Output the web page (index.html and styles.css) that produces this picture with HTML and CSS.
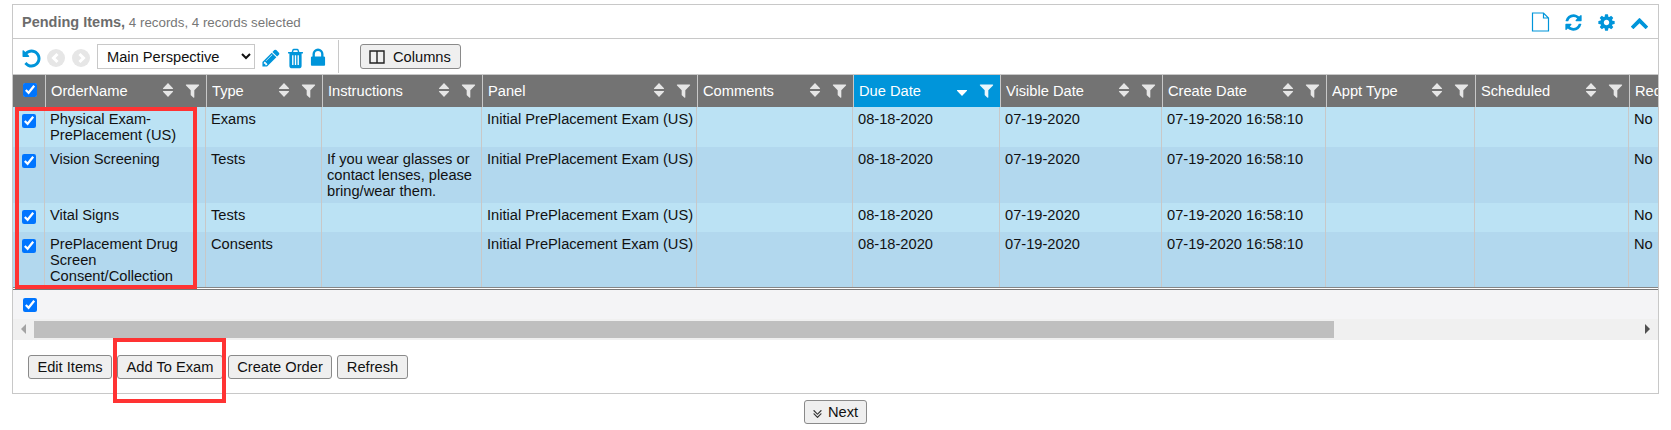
FILE: index.html
```html
<!DOCTYPE html>
<html lang="en">
<head>
  <meta charset="UTF-8">
  <title>Pending Items</title>
  <link rel="stylesheet" href="styles.css">
</head>
<body>
  <svg class="sprite" aria-hidden="true">
    <symbol id="i-filter" viewBox="0 0 1792 1792"><path d="M1595 295q17 41-14 70l-493 493v742q0 42-39 59-13 5-25 5-27 0-45-19l-256-256q-19-19-19-45v-486l-493-493q-31-29-14-70 17-39 59-39h1280q42 0 59 39z"/></symbol>
    <symbol id="i-sort" viewBox="0 0 12 16"><path d="M6 1l5 5.2q.4.8-.5.8H1.500q-.9 0-.5-.8zM6 15l5-5.200q.4-.8-.5-.8H1.500q-.9 0-.5.8z"/></symbol>
    <symbol id="i-sort-down" viewBox="0 0 12 16"><path d="M6 15l5-5.200q.4-.8-.5-.8H1.500q-.9 0-.5.8z"/></symbol>
    <symbol id="i-cog" viewBox="0 0 1792 1792"><path d="M1152 896q0-106-75-181t-181-75-181 75-75 181 75 181 181 75 181-75 75-181zm512-109v222q0 12-8 23t-20 13l-185 28q-19 54-39 91 35 50 107 138 10 12 10 25t-9 23q-27 37-99 108t-94 71q-12 0-26-9l-138-108q-44 23-91 38-16 136-29 186-7 28-36 28h-222q-14 0-24.500-8.500t-11.500-21.500l-28-184q-49-16-90-37l-141 107q-10 9-25 9-14 0-25-11-126-114-165-168-7-10-7-23 0-12 8-23 15-21 51-66.500t54-70.500q-27-50-41-99l-183-27q-13-2-21-12.500t-8-23.500v-222q0-12 8-23t19-13l186-28q14-46 39-92-40-57-107-138-10-12-10-24 0-10 9-23 26-36 98.500-107.500t94.500-71.500q13 0 26 10l138 107q44-23 91-38 16-136 29-186 7-28 36-28h222q14 0 24.500 8.500t11.500 21.500l28 184q49 16 90 37l142-107q9-9 24-9 13 0 25 10 129 119 165 170 7 8 7 22 0 12-8 23-15 21-51 66.500t-54 70.500q26 50 41 98l183 28q13 2 21 12.500t8 23.500z"/></symbol>
    <symbol id="i-refresh" viewBox="0 0 1792 1792"><path d="M1639 1056q0 5-1 7-64 268-268 434.500t-478 166.500q-146 0-282.500-55t-243.500-157l-129 129q-19 19-45 19t-45-19-19-45v-448q0-26 19-45t45-19h448q26 0 45 19t19 45-19 45l-137 137q71 66 161 102t187 36q134 0 250-65t186-179q11-17 53-117 8-23 30-23h192q13 0 22.500 9.500t9.500 22.500zm25-800v448q0 26-19 45t-45 19h-448q-26 0-45-19t-19-45 19-45l138-138q-148-137-349-137-134 0-250 65t-186 179q-11 17-53 117-8 23-30 23h-199q-13 0-22.500-9.500t-9.500-22.500v-7q65-268 270-434.500t480-166.500q146 0 284 55.500t245 156.500l130-129q19-19 45-19t45 19 19 45z"/></symbol>
    <symbol id="i-chevron" viewBox="0 0 1792 1792"><path d="M1683 1331l-166 165q-19 19-45 19t-45-19l-531-531-531 531q-19 19-45 19t-45-19l-166-165q-19-19-19-45.500t19-45.500l742-741q19-19 45-19t45 19l742 741q19 19 19 45.500t-19 45.500z"/></symbol>
    <symbol id="i-undo" viewBox="0 0 1792 1792"><path d="M1664 896q0 156-61 298t-164 245-245 164-298 61q-172 0-327-72.500t-264-204.500q-7-10-6.500-22.500t8.500-20.500l137-138q10-9 25-9 16 2 23 12 73 95 179 147t225 52q104 0 198.500-40.500t163.500-109.500 109.500-163.500 40.500-198.500-40.500-198.500-109.500-163.500-163.500-109.500-198.500-40.500q-98 0-188 35.500t-160 101.500l137 138q31 30 14 69-17 40-59 40h-448q-26 0-45-19t-19-45v-448q0-42 40-59 39-17 69 14l130 129q107-101 244.500-156.500t284.500-55.500q156 0 298 61t245 164 164 245 61 298z"/></symbol>
    <symbol id="i-pencil" viewBox="0 0 1792 1792"><path d="M491 1536l91-91-235-235-91 91v107h128v128h107zm523-928q0-22-22-22-10 0-17 7l-542 542q-7 7-7 17 0 22 22 22 10 0 17-7l542-542q7-7 7-17zm-54-192l416 416-832 832h-416v-416zm683 96q0 53-37 90l-166 166-416-416 166-165q36-38 90-38 53 0 91 38l235 234q37 39 37 91z"/></symbol>
    <symbol id="i-trash" viewBox="0 0 1792 1792" preserveAspectRatio="none"><path d="M704 1376v-704q0-14-9-23t-23-9h-64q-14 0-23 9t-9 23v704q0 14 9 23t23 9h64q14 0 23-9t9-23zm256 0v-704q0-14-9-23t-23-9h-64q-14 0-23 9t-9 23v704q0 14 9 23t23 9h64q14 0 23-9t9-23zm256 0v-704q0-14-9-23t-23-9h-64q-14 0-23 9t-9 23v704q0 14 9 23t23 9h64q14 0 23-9t9-23zm-544-992h448l-48-117q-7-9-17-11h-317q-10 2-17 11zm928 32v64q0 14-9 23t-23 9h-96v948q0 83-47 143.500t-113 60.500h-832q-66 0-113-58.500t-47-141.500v-952h-96q-14 0-23-9t-9-23v-64q0-14 9-23t23-9h309l70-167q15-37 54-63t79-26h320q40 0 79 26t54 63l70 167h309q14 0 23 9t9 23z"/></symbol>
    <symbol id="i-lock" viewBox="0 0 1792 1792"><path d="M640 768h512v-192q0-106-75-181t-181-75-181 75-75 181v192zm832 96v576q0 40-28 68t-68 28h-960q-40 0-68-28t-28-68v-576q0-40 28-68t68-28h32v-192q0-184 132-316t316-132 316 132 132 316v192h32q40 0 68 28t28 68z"/></symbol>
    <symbol id="i-double" viewBox="0 0 1792 1792"><path d="M1395 1184q0 13-10 23l-466 466q-10 10-23 10t-23-10l-466-466q-10-10-10-23t10-23l50-50q10-10 23-10t23 10l393 393 393-393q10-10 23-10t23 10l50 50q10 10 10 23zm0-384q0 13-10 23l-466 466q-10 10-23 10t-23-10l-466-466q-10-10-10-23t10-23l50-50q10-10 23-10t23 10l393 393 393-393q10-10 23-10t23 10l50 50q10 10 10 23z"/></symbol>
  </svg>

  <div class="panel">
    <div class="title-bar">
      <div class="title"><strong>Pending Items,</strong> 4 records, 4 records selected</div>
      <div class="title-icons">
        <svg class="ico-page" viewBox="0 0 18 20"><path d="M1 1h11l5 5v13H1zM12 1v5h5" fill="#fff" stroke="#0095da" stroke-width="1.2"/></svg>
        <svg class="ico"><use href="#i-refresh"/></svg>
        <svg class="ico"><use href="#i-cog"/></svg>
        <svg class="ico"><use href="#i-chevron"/></svg>
      </div>
    </div>

    <div class="toolbar">
      <svg class="ico tool-undo"><use href="#i-undo"/></svg>
      <svg class="nav-dot nav-back" viewBox="0 0 18 18"><circle cx="9" cy="9" r="9"/><path d="M10.500 5L6.500 9l4 4"/></svg>
      <svg class="nav-dot nav-fwd" viewBox="0 0 18 18"><circle cx="9" cy="9" r="9"/><path d="M7.500 5l4 4-4 4"/></svg>
      <select class="persp"><option>Main Perspective</option></select>
      <svg class="ico tool-pencil"><use href="#i-pencil"/></svg>
      <svg class="ico tool-trash"><use href="#i-trash"/></svg>
      <svg class="ico tool-lock"><use href="#i-lock"/></svg>
      <span class="tool-sep"></span>
      <button class="btn btn-columns">
        <svg class="ico-cols" viewBox="0 0 16 14"><path d="M1 1h14v12H1zM8 1v12" fill="none" stroke="#222" stroke-width="1.4"/></svg>
        Columns
      </button>
    </div>

    <div class="grid-outer">
      <div class="grid-wrap">
        <table class="grid">
          <colgroup>
            <col class="c0"><col class="c1"><col class="c2"><col class="c3"><col class="c4"><col class="c5">
            <col class="c6"><col class="c7"><col class="c8"><col class="c9"><col class="c10"><col class="c11">
          </colgroup>
          <thead>
            <tr>
              <th><input type="checkbox" checked></th>
              <th><div class="th-in"><span>OrderName</span><svg class="s"><use href="#i-sort"/></svg><svg class="f"><use href="#i-filter"/></svg></div></th>
              <th><div class="th-in"><span>Type</span><svg class="s"><use href="#i-sort"/></svg><svg class="f"><use href="#i-filter"/></svg></div></th>
              <th><div class="th-in"><span>Instructions</span><svg class="s"><use href="#i-sort"/></svg><svg class="f"><use href="#i-filter"/></svg></div></th>
              <th><div class="th-in"><span>Panel</span><svg class="s"><use href="#i-sort"/></svg><svg class="f"><use href="#i-filter"/></svg></div></th>
              <th><div class="th-in"><span>Comments</span><svg class="s"><use href="#i-sort"/></svg><svg class="f"><use href="#i-filter"/></svg></div></th>
              <th class="sorted"><div class="th-in"><span>Due Date</span><svg class="s"><use href="#i-sort-down"/></svg><svg class="f"><use href="#i-filter"/></svg></div></th>
              <th><div class="th-in"><span>Visible Date</span><svg class="s"><use href="#i-sort"/></svg><svg class="f"><use href="#i-filter"/></svg></div></th>
              <th><div class="th-in"><span>Create Date</span><svg class="s"><use href="#i-sort"/></svg><svg class="f"><use href="#i-filter"/></svg></div></th>
              <th><div class="th-in"><span>Appt Type</span><svg class="s"><use href="#i-sort"/></svg><svg class="f"><use href="#i-filter"/></svg></div></th>
              <th><div class="th-in"><span>Scheduled</span><svg class="s"><use href="#i-sort"/></svg><svg class="f"><use href="#i-filter"/></svg></div></th>
              <th><div class="th-in"><span>Requested</span></div></th>
            </tr>
          </thead>
          <tbody>
            <tr class="r1">
              <td class="chk"><input type="checkbox" checked></td>
              <td>Physical Exam-PrePlacement (US)</td><td>Exams</td><td></td>
              <td>Initial PrePlacement Exam (US)</td><td></td>
              <td>08-18-2020</td><td>07-19-2020</td><td>07-19-2020 16:58:10</td><td></td><td></td><td>No</td>
            </tr>
            <tr class="r2">
              <td class="chk"><input type="checkbox" checked></td>
              <td>Vision Screening</td><td>Tests</td><td>If you wear glasses or contact lenses, please bring/wear them.</td>
              <td>Initial PrePlacement Exam (US)</td><td></td>
              <td>08-18-2020</td><td>07-19-2020</td><td>07-19-2020 16:58:10</td><td></td><td></td><td>No</td>
            </tr>
            <tr class="r1">
              <td class="chk"><input type="checkbox" checked></td>
              <td>Vital Signs</td><td>Tests</td><td></td>
              <td>Initial PrePlacement Exam (US)</td><td></td>
              <td>08-18-2020</td><td>07-19-2020</td><td>07-19-2020 16:58:10</td><td></td><td></td><td>No</td>
            </tr>
            <tr class="r2 last">
              <td class="chk"><input type="checkbox" checked></td>
              <td>PrePlacement Drug Screen Consent/Collection</td><td>Consents</td><td></td>
              <td>Initial PrePlacement Exam (US)</td><td></td>
              <td>08-18-2020</td><td>07-19-2020</td><td>07-19-2020 16:58:10</td><td></td><td></td><td>No</td>
            </tr>
          </tbody>
        </table>
      </div>
      <div class="mark mark-rows"></div>
    </div>

    <div class="grid-foot"><input type="checkbox" checked></div>
    <div class="hscroll">
      <span class="arr arr-l"></span>
      <div class="track"><div class="thumb"></div></div>
      <span class="arr arr-r"></span>
    </div>

    <div class="actions">
      <button class="btn btn-edit">Edit Items</button>
      <button class="btn btn-add">Add To Exam</button>
      <button class="btn btn-create">Create Order</button>
      <button class="btn btn-refresh">Refresh</button>
      <div class="mark mark-add"></div>
    </div>
  </div>

  <div class="next-row">
    <button class="btn btn-next"><svg class="ico-next"><use href="#i-double"/></svg>Next</button>
  </div>
</body>
</html>
```

FILE: styles.css
```css
:root{
  --blue:#0095da;
  --line:#c8c8c8;
  --head:#737373;
  --row1:#bbe2f4;
  --row2:#b2d8ee;
  --red:#ff3333;
}
*{box-sizing:border-box}
html,body{margin:0;padding:0}
body{
  background:#fff;color:#111;
  font-family:"Liberation Sans",Arial,sans-serif;font-size:14.67px;
  padding:4px 12px 0;
  overflow:hidden;
}
.sprite{display:none}
.panel{border:1px solid var(--line);width:1647px;height:390px}

.title-bar{display:flex;align-items:center;justify-content:space-between;height:34px;border-bottom:1px solid var(--line);padding:0 9px}
.title{font-size:13.33px;color:#777}
.title strong{font-size:14.5px;color:#6c6c6c}
.title-icons{display:flex;align-items:center;gap:14px;padding-top:1px}
.ico{width:19px;height:19px;fill:var(--blue);display:block;flex:none}
.ico-page{width:19px;height:20px;display:block}

.toolbar{display:flex;align-items:center;height:35px;padding-left:8px}
.tool-undo{width:21px;height:21px;margin-top:3px}
.nav-dot{width:18px;height:18px;flex:none;margin-top:3px}
.nav-back{margin-left:5px}
.nav-fwd{margin-left:7px}
.nav-dot circle{fill:#e6e6e6}
.nav-dot path{fill:none;stroke:#fff;stroke-width:3}
.persp{width:158px;height:25px;margin:0 6px 0 7px;font:14.67px "Liberation Sans",Arial,sans-serif;background:#fff;border:1px solid var(--line);color:#111;padding-left:5px}
.tool-pencil{width:20px;height:20px;margin-top:3px}
.tool-trash{width:19px;height:23px;margin:3px 0 0 5px}
.tool-lock{width:22px;height:22px;margin:2px 0 0 2px}
.tool-sep{width:1px;height:33px;background:var(--line);margin:0 21px 0 9px}

.btn{font:14.67px "Liberation Sans",Arial,sans-serif;color:#111;background:#efefef;border:1px solid #8a8a8a;border-radius:3px;height:24px;padding:0;display:inline-flex;align-items:center;justify-content:center;white-space:nowrap}
.btn-columns{gap:8px;height:25px;width:101px;justify-content:flex-start;padding-left:8px}
.btn-edit{width:84px}
.btn-add{width:106px}
.btn-create{width:104px}
.btn-refresh{width:71px}
.ico-cols{width:16px;height:14px;flex:none}

.grid-outer{position:relative}
.grid-wrap{overflow:hidden;height:214px;border-bottom:1px solid #868686}
.grid{border-collapse:separate;border-spacing:0;table-layout:fixed;width:1701px}
.c0{width:32px}.c1{width:161px}.c2{width:116px}.c3{width:160px}.c4{width:215px}.c5{width:156px}
.c6{width:147px}.c7{width:162px}.c8{width:164px}.c9{width:149px}.c10{width:154px}.c11{width:85px}
.grid th{background:var(--head);color:#fff;font-weight:400;height:33px;padding:0 5px;border-left:1px solid var(--line);border-top:1px solid var(--line);text-align:left;white-space:nowrap}
.grid th:first-child{border-left:0;padding:0}
.grid th input{display:block;margin:0 0 2px 10px}
.grid th.sorted{background:var(--blue)}
.th-in{display:flex;align-items:center}
.th-in span{flex:1;overflow:hidden}
.s{width:12px;height:16px;fill:#e6e6e6;margin:-2px 10px 0 0;flex:none}
.f{width:17px;height:17px;fill:#e6e6e6;margin-top:-2px;flex:none}
.sorted .s{fill:#fff;margin-top:-4px}
.sorted .f{fill:#e9f6fc}
.grid td{vertical-align:top;padding:4px 2px 4px 5px;line-height:16px;border-right:1px solid var(--line);color:#111}
.grid td.chk{padding:7px 0 8px 9px}
.grid td.chk input{display:block}
.r1 td{background:var(--row1)}
.r2 td{background:var(--row2)}
.grid .last td{padding-bottom:3px}
input[type=checkbox]{width:14px;height:14px;margin:0;accent-color:#0075ff}

.mark{position:absolute;border:4px solid var(--red);pointer-events:none}
.mark-rows{left:2px;top:33px;width:182px;height:182px}

.grid-foot{height:30px;background:#f4f4f6;padding:8px 0 0 10px;border-top:1px solid #777;margin-top:1px}
.grid-foot input{display:block}
.hscroll{display:flex;height:21px;background:#f0f0f0}
.arr{flex:none;width:21px;position:relative}
.arr::after{content:"";position:absolute;top:5px;border:5px solid transparent}
.arr-l::after{left:8px;border-left:0;border-right-color:#a3a3a3}
.arr-r::after{right:8px;border-right:0;border-left-color:#505050}
.track{flex:1;padding-top:2px}
.thumb{width:1300px;height:17px;background:#bfbfbf}

.actions{position:relative;display:flex;gap:5px;padding:15px 0 0 15px}
.mark-add{left:100px;top:-2px;width:113px;height:65px}

.next-row{display:flex;justify-content:center;width:1647px;padding-top:6px}
.btn-next{width:63px;padding:0 8px 0 5px;gap:3px}
.ico-next{width:15px;height:15px;fill:#333;flex:none;margin-top:-2px}
```
